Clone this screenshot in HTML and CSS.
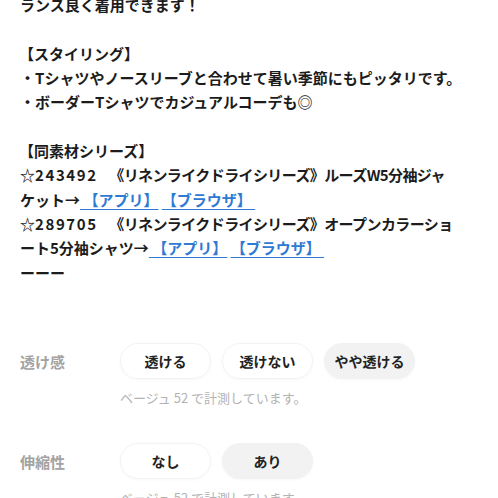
FILE: index.html
```html
<!DOCTYPE html>
<html lang="ja">
<head>
<meta charset="utf-8">
<link rel="stylesheet" href="styles.css">
</head>
<body>
<div class="page">
  <div class="desc">
    <div class="ln">ランス良く着用できます！</div>
    <div class="ln">&nbsp;</div>
    <div class="ln br">【スタイリング】</div>
    <div class="ln">・Tシャツやノースリーブと合わせて暑い季節にもピッタリです。</div>
    <div class="ln">・ボーダーTシャツでカジュアルコーデも◎</div>
    <div class="ln">&nbsp;</div>
    <div class="ln br">【同素材シリーズ】</div>
    <div class="ln">☆<span class="num">243492</span>　<span class="tight">《リネンライクドライシリーズ》ルーズW5分袖ジャ</span></div>
    <div class="ln">ケット→<a class="lnk" href="#">&nbsp;【アプリ】</a> <a class="lnk" href="#">【ブラウザ】&nbsp;</a></div>
    <div class="ln">☆<span class="num">289705</span>　<span class="tight">《リネンライクドライシリーズ》オープンカラーショ</span></div>
    <div class="ln">ート5分袖シャツ→<a class="lnk" href="#">&nbsp;【アプリ】</a> <a class="lnk" href="#">【ブラウザ】&nbsp;</a></div>
    <div class="ln">ーーー</div>
  </div>

  <div class="attr">
    <div class="row">
      <div class="label">透け感</div>
      <div class="pills">
        <span class="pill">透ける</span>
        <span class="pill">透けない</span>
        <span class="pill on">やや透ける</span>
      </div>
    </div>
    <div class="note">ベージュ 52 で計測しています。</div>
  </div>

  <div class="attr">
    <div class="row">
      <div class="label">伸縮性</div>
      <div class="pills">
        <span class="pill">なし</span>
        <span class="pill on">あり</span>
      </div>
    </div>
    <div class="note">ベージュ 52 で計測しています。</div>
  </div>
</div>
</body>
</html>
```
FILE: styles.css
```css
html, body {
  margin: 0;
  padding: 0;
  background: #ffffff;
}
body {
  font-family: "Noto Sans CJK JP", "Noto Sans", sans-serif;
  color: #1c1c1c;
  overflow: hidden;
}
.page {
  padding: 0 20px;
}
.desc {
  margin-top: -7px;
  font-size: 15px;
  line-height: 24.35px;
  font-weight: 700;
}
.ln {
  white-space: nowrap;
}
.br {
  margin-left: -1px;
}
.num {
  letter-spacing: 1.6px;
  margin-right: 4px;
}
.tight {
  letter-spacing: -0.6px;
}
.lnk {
  color: #2f7ad3;
  text-decoration: underline;
  text-decoration-thickness: 1px;
  text-underline-offset: 3px;
}
.attr {
  margin-top: 58px;
}
.attr + .attr {
  margin-top: 36px;
}
.row {
  display: flex;
  align-items: center;
}
.label {
  width: 100px;
  font-size: 15px;
  font-weight: 700;
  color: #a3a3a3;
}
.pills {
  display: flex;
  gap: 11px;
}
.pill {
  width: 91px;
  height: 36px;
  box-sizing: border-box;
  border-radius: 18px;
  border: 1px solid #f3f3f3;
  box-shadow: 0 1px 3px rgba(0,0,0,0.03);
  display: flex;
  align-items: center;
  justify-content: center;
  font-size: 14px;
  font-weight: 700;
  color: #222;
}
.pill.on {
  background: #f2f2f2;
  border-color: #f2f2f2;
}
.note {
  margin-top: 10px;
  margin-left: 100px;
  font-size: 13px;
  line-height: 18px;
  color: #b3b3b3;
}
```
